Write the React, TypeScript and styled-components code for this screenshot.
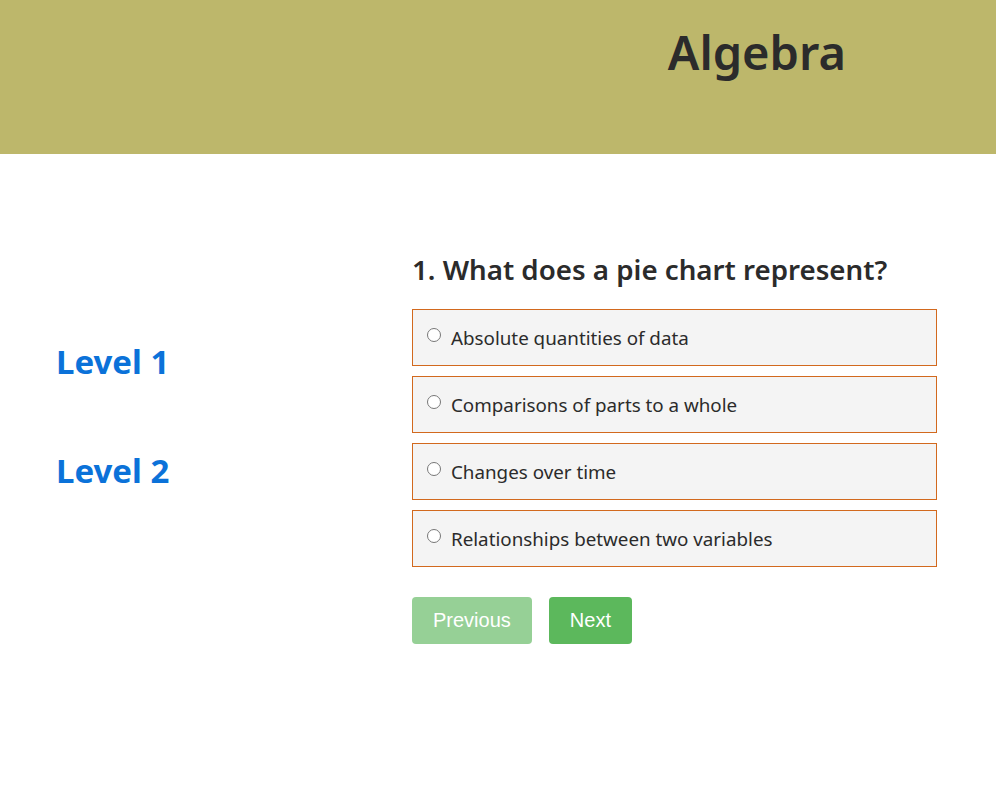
import React, { useState } from "react";
import styled, { createGlobalStyle } from "styled-components";

const Global = createGlobalStyle`
    html, body {
        margin: 0;
        padding: 0;
        background: #ffffff;
    }
    body {
        font-family: "Noto Sans", "Open Sans", sans-serif;
        color: #2b2b2b;
    }
`;

const Header = styled.header`
    background-color: #bdb76b;
    height: 154px;
    display: flex;
    justify-content: flex-end;
    align-items: flex-start;
    padding-right: 150px;
    box-sizing: border-box;
`;

const Title = styled.h1`
    margin: 22px 0 0;
    font-size: 47px;
    line-height: 60px;
    font-weight: 600;
    color: #2b2b2b;
`;

const Main = styled.main`
    display: grid;
    grid-template-columns: 412px 525px;
    padding-top: 95px;
`;

const Levels = styled.nav`
    display: flex;
    flex-direction: column;
    gap: 64px;
    padding: 90px 0 0 56px;
`;

const LevelLink = styled.a`
    font-size: 33px;
    line-height: 45px;
    font-weight: 700;
    color: #0b72d9;
    text-decoration: none;
    cursor: pointer;
`;

const Quiz = styled.section`
    display: flex;
    flex-direction: column;
`;

const Question = styled.h2`
    margin: 0 0 20px;
    font-size: 27.7px;
    line-height: 40px;
    font-weight: 600;
    color: #2b2b2b;
`;

const Options = styled.div`
    display: flex;
    flex-direction: column;
    gap: 10px;
`;

const Option = styled.label`
    display: flex;
    align-items: flex-start;
    height: 57px;
    box-sizing: border-box;
    border: 1px solid #d2691e;
    background: #f4f4f4;
    padding: 14px 14px 0;
    font-size: 18.8px;
    line-height: 28px;
    color: #2b2b2b;
    cursor: pointer;
`;

const Radio = styled.input`
    margin: 4px 10px 0 0;
    width: 14px;
    height: 14px;
    flex: none;
`;

const Buttons = styled.div`
    display: flex;
    gap: 17px;
    margin-top: 30px;
`;

const NavButton = styled.button<{ $disabled?: boolean }>`
    height: 47px;
    padding: 0 21px;
    border: none;
    border-radius: 4px;
    background: ${(p) => (p.$disabled ? "#96d096" : "#5cb85c")};
    color: #ffffff;
    font-family: "Liberation Sans", Arial, sans-serif;
    font-size: 20px;
    cursor: ${(p) => (p.$disabled ? "default" : "pointer")};
`;

const answers = [
    "Absolute quantities of data",
    "Comparisons of parts to a whole",
    "Changes over time",
    "Relationships between two variables",
];

const App = () => {
    const [picked, setPicked] = useState<number | null>(null);

    return (
        <>
            <Global />
            <Header>
                <Title>Algebra</Title>
            </Header>
            <Main>
                <Levels>
                    <LevelLink>Level 1</LevelLink>
                    <LevelLink>Level 2</LevelLink>
                </Levels>
                <Quiz>
                    <Question>1. What does a pie chart represent?</Question>
                    <Options>
                        {answers.map((a, i) => (
                            <Option key={a}>
                                <Radio
                                    type="radio"
                                    name="q1"
                                    checked={picked === i}
                                    onChange={() => setPicked(i)}
                                />
                                {a}
                            </Option>
                        ))}
                    </Options>
                    <Buttons>
                        <NavButton $disabled>Previous</NavButton>
                        <NavButton>Next</NavButton>
                    </Buttons>
                </Quiz>
            </Main>
        </>
    );
};

export default App;
